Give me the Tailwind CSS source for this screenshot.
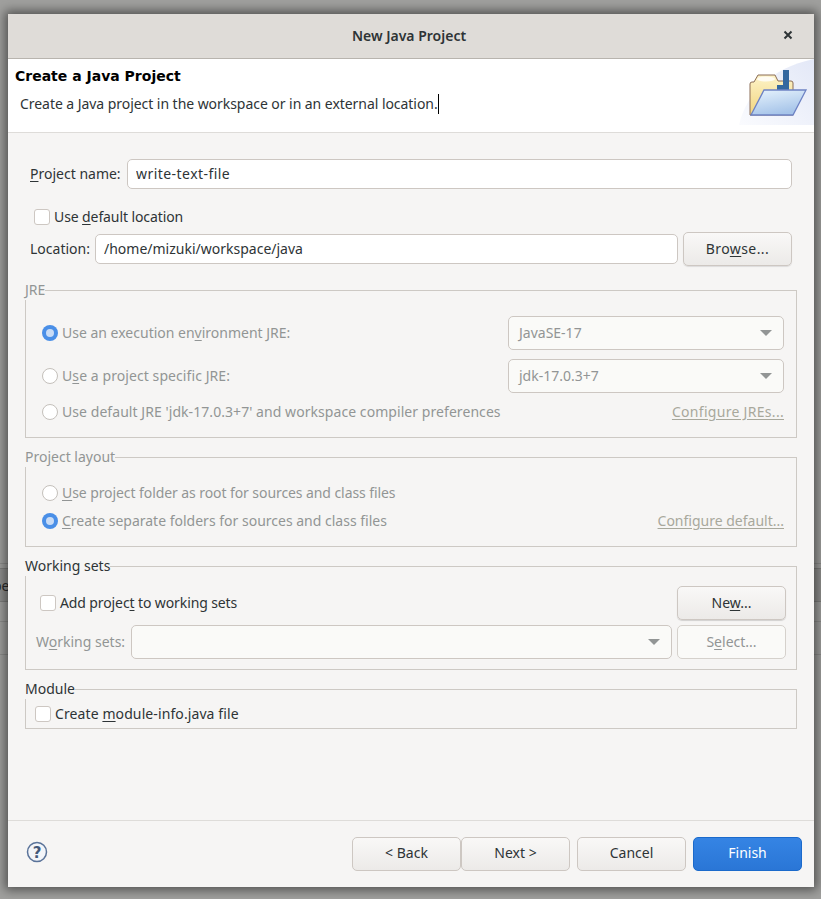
<!DOCTYPE html>
<html>
<head>
<meta charset="utf-8">
<script src="https://cdn.jsdelivr.net/npm/@tailwindcss/browser@4"></script>
</head>
<body class="m-0 bg-[#8f8f8f]">
<div class="relative h-[899px] w-[821px] overflow-hidden bg-[#a0a09e] pt-[14px] pl-[8px] font-['Noto_Sans',sans-serif] text-[14px] text-[#2e3436]">
  <div class="absolute left-0 top-[563px] h-px w-full bg-[#8d8d8b]"></div>
  <div class="absolute left-0 top-[568px] h-[34px] w-full border-y border-[#7f7f7d] bg-[#90908e]"></div>
  <div class="absolute left-0 top-[621px] h-px w-full bg-[#8d8d8b]"></div>
  <div class="absolute left-0 top-[654px] h-px w-full bg-[#8d8d8b]"></div>
  <div class="absolute left-0 top-[576px] -ml-[7px] text-[14px] leading-[20px] text-[#2a2a2a]">pe</div>
  <div class="relative flex h-[873px] w-[806px] flex-col bg-[#f6f5f4] shadow-[0_0_10px_3px_rgba(0,0,0,0.5)]">
    <div class="relative flex h-[45px] shrink-0 items-center justify-center border-b border-[#b8b4ae] bg-[#dfdcd8] pr-[4px]">
      <span class="mb-[2px] text-[14px] font-semibold">New Java Project</span>
      <svg class="absolute right-[21px] top-[16px]" width="10" height="10" viewBox="0 0 10 10"><path d="M1.5 1.5 L8.5 8.5 M8.5 1.5 L1.5 8.5" stroke="#2e3436" stroke-width="2"/></svg>
    </div>
    <div class="relative h-[74px] shrink-0 border-b border-[#dedcd9] bg-white">
      <div class="pl-[7px] pt-[6px] font-['DejaVu_Sans',sans-serif] text-[14px] font-bold leading-[22px] text-black">Create a Java Project</div>
      <div class="pl-[12px] pt-[7px] leading-[20px] tracking-[-0.05px]">Create a Java project in the workspace or in an external location.<span class="inline-block h-[20px] w-px bg-black align-top"></span></div>
      <svg class="absolute right-0 top-0" width="76" height="66" viewBox="0 0 76 66">
        <defs>
          <linearGradient id="fg" x1="0" y1="0" x2="0.4" y2="1"><stop offset="0" stop-color="#e8f4fd"/><stop offset="1" stop-color="#a6c4e9"/></linearGradient>
          <linearGradient id="bk" x1="0" y1="0" x2="0" y2="1"><stop offset="0" stop-color="#fdf3c8"/><stop offset="1" stop-color="#f1d57f"/></linearGradient>
          <linearGradient id="sw" x1="0" y1="1" x2="1" y2="0"><stop offset="0" stop-color="#fafbfe"/><stop offset="1" stop-color="#e3e8f7"/></linearGradient>
        </defs>
        <path d="M1 66 C8 36 32 9 76 0 L76 66 Z" fill="url(#sw)"/>
        <path d="M12 25 Q12 23 14 23 L16 23 L20 16 L37 16 L40 22 L53 22 Q55 22 55 24 L55 56 L12 56 Z" fill="url(#bk)" stroke="#8b6d56"/>
        <ellipse cx="28" cy="20" rx="9" ry="2.5" fill="#ffffff" opacity="0.8"/>
        <path d="M39 26 L45 26 L45 11 L51 11 L51 31 L39 31 Z" fill="#34689f"/>
        <path d="M26 31 L68 31 L55 56 L13 56 Z" fill="url(#fg)" stroke="#6d82c4" stroke-width="1.3"/>
      </svg>
    </div>
    <div class="flex-1 px-[17px]">
      <div class="mt-[26px] flex h-[30px] items-center pl-[5px]">
        <span class="mb-[2px] w-[97px]"><u class="underline-offset-2">P</u>roject name:</span>
        <input class="h-[30px] w-[665px] rounded-[5px] border border-[#cdc7c2] bg-white px-[8px] pb-[2px] text-[14px] tracking-[0.45px] text-[#2e3436] outline-none" value="write-text-file">
      </div>
      <div class="mt-[19px] flex h-[18px] items-center pl-[9px]">
        <span class="h-[16px] w-[16px] rounded-[3px] border border-[#cdc7c2] bg-white"></span>
        <span class="mb-[2px] ml-[4px] tracking-[-0.1px]">Use <u class="underline-offset-2">d</u>efault location</span>
      </div>
      <div class="mt-[6px] flex h-[34px] items-center pl-[5px]">
        <span class="mb-[2px] w-[65px]">Location:</span>
        <input class="h-[30px] w-[583px] rounded-[5px] border border-[#cdc7c2] bg-white px-[8px] pb-[2px] text-[14px] text-[#2e3436] outline-none" value="/home/mizuki/workspace/java">
        <button class="ml-[5px] h-[34px] w-[109px] rounded-[5px] border border-[#cdc7c2] bg-gradient-to-b from-[#f9f8f7] to-[#eceae8] pb-[2px] text-[14px] tracking-[0.4px] shadow-[0_1px_1px_rgba(0,0,0,0.1)]">Bro<u class="underline-offset-2">w</u>se...</button>
      </div>

      <fieldset class="mt-[14px] h-[158px] w-[772px] min-w-0 border border-[#cdc9c4] pl-[16px] pr-[12px] text-[#929595]">
        <legend class="-ml-[17px] bg-[#f6f5f4] leading-[20px]">JRE</legend>
        <div class="mt-[16px] flex h-[34px] items-center">
          <span class="flex h-[16px] w-[16px] items-center justify-center rounded-full bg-[#4a8fe7]"><span class="h-[8px] w-[8px] rounded-full bg-[#c9dcf6]"></span></span>
          <span class="mb-[2px] ml-[4px] w-[446px]">Use an execution en<u class="underline-offset-2">v</u>ironment JRE:</span>
          <div class="flex h-[34px] w-[276px] items-center justify-between rounded-[5px] border border-[#cdc7c2] bg-[#fafaf8] pl-[10px] pr-[11px]"><span class="mb-[2px]">JavaSE-17</span><svg width="12" height="6" viewBox="0 0 12 6"><path d="M0 0 H12 L6 6 Z" fill="#929595"/></svg></div>
        </div>
        <div class="mt-[9px] flex h-[34px] items-center">
          <span class="h-[16px] w-[16px] rounded-full border border-[#c4c0bb] bg-white"></span>
          <span class="mb-[2px] ml-[4px] w-[446px] tracking-[0.08px]">U<u class="underline-offset-2">s</u>e a project specific JRE:</span>
          <div class="flex h-[34px] w-[276px] items-center justify-between rounded-[5px] border border-[#cdc7c2] bg-[#fafaf8] pl-[10px] pr-[11px]"><span class="mb-[2px]">jdk-17.0.3+7</span><svg width="12" height="6" viewBox="0 0 12 6"><path d="M0 0 H12 L6 6 Z" fill="#929595"/></svg></div>
        </div>
        <div class="mt-[9px] flex h-[20px] items-center justify-between">
          <div class="flex items-center"><span class="h-[16px] w-[16px] rounded-full border border-[#c4c0bb] bg-white"></span><span class="mb-[2px] ml-[4px] tracking-[0.06px]">Use default JRE 'jdk-17.0.3+7' and workspace compiler preferences</span></div>
          <span class="mb-[2px] tracking-[0.3px] text-[#a8a89c] underline underline-offset-2">Configure JREs...</span>
        </div>
      </fieldset>

      <fieldset class="mt-[9px] h-[100px] w-[772px] min-w-0 border border-[#cdc9c4] pl-[16px] pr-[12px] text-[#929595]">
        <legend class="-ml-[17px] bg-[#f6f5f4] leading-[20px]">Project layout</legend>
        <div class="mt-[16px] flex h-[20px] items-center"><span class="h-[16px] w-[16px] rounded-full border border-[#c4c0bb] bg-white"></span><span class="mb-[2px] ml-[4px] tracking-[-0.08px]"><u class="underline-offset-2">U</u>se project folder as root for sources and class files</span></div>
        <div class="mt-[8px] flex h-[20px] items-center justify-between">
          <div class="flex items-center"><span class="flex h-[16px] w-[16px] items-center justify-center rounded-full bg-[#4a8fe7]"><span class="h-[8px] w-[8px] rounded-full bg-[#c9dcf6]"></span></span><span class="mb-[2px] ml-[4px]"><u class="underline-offset-2">C</u>reate separate folders for sources and class files</span></div>
          <span class="mb-[2px] text-[#a8a89c] underline underline-offset-2">Configure default...</span>
        </div>
      </fieldset>

      <fieldset class="mt-[9px] h-[114px] w-[772px] min-w-0 border border-[#cdc9c4] pl-[10px] pr-[10px]">
        <legend class="-ml-[11px] bg-[#f6f5f4] leading-[20px]">Working sets</legend>
        <div class="mt-[10px] flex h-[34px] items-center pl-[4px]">
          <span class="h-[16px] w-[16px] rounded-[3px] border border-[#cdc7c2] bg-white"></span>
          <span class="mb-[2px] ml-[4px] w-[617px] tracking-[-0.11px]">Add projec<u class="underline-offset-2">t</u> to working sets</span>
          <button class="h-[34px] w-[109px] rounded-[5px] border border-[#cdc7c2] bg-gradient-to-b from-[#f9f8f7] to-[#eceae8] pb-[2px] text-[14px] shadow-[0_1px_1px_rgba(0,0,0,0.15)]">Ne<u class="underline-offset-2">w</u>...</button>
        </div>
        <div class="mt-[5px] flex h-[34px] items-center">
          <span class="mb-[2px] w-[95px] text-[#929595]">W<u class="underline-offset-2">o</u>rking sets:</span>
          <div class="flex h-[34px] w-[541px] items-center justify-end rounded-[5px] border border-[#cdc7c2] bg-[#fafaf8] pr-[11px]"><svg width="12" height="6" viewBox="0 0 12 6"><path d="M0 0 H12 L6 6 Z" fill="#929595"/></svg></div>
          <button class="ml-[5px] h-[34px] w-[109px] rounded-[5px] border border-[#d5d1cc] bg-[#fafaf8] pb-[2px] text-[14px] text-[#929595]">S<u class="underline-offset-2">e</u>lect...</button>
        </div>
      </fieldset>

      <fieldset class="mt-[9px] h-[50px] w-[772px] min-w-0 border border-[#cdc9c4] pl-[9px]">
        <legend class="-ml-[10px] bg-[#f6f5f4] leading-[20px]">Module</legend>
        <div class="mt-[5px] flex h-[20px] items-center">
          <span class="h-[16px] w-[16px] rounded-[3px] border border-[#cdc7c2] bg-white"></span>
          <span class="mb-[2px] ml-[4px] tracking-[0.1px]">Create <u class="underline-offset-2">m</u>odule-info.java file</span>
        </div>
      </fieldset>
    </div>
    <div class="flex h-[67px] shrink-0 items-start border-t border-[#dedcd9] pl-[18px] pr-[12px] pt-[16px]">
      <svg class="mt-[4px]" width="22" height="22" viewBox="0 0 22 22"><circle cx="11" cy="11" r="9.5" fill="#f3f5f9" stroke="#5a7399" stroke-width="1.5"/><text x="11" y="16.5" text-anchor="middle" font-family="DejaVu Sans" font-weight="bold" font-size="15" fill="#44597a">?</text></svg>
      <div class="ml-auto flex">
        <button class="h-[34px] w-[109px] rounded-[5px] border border-[#cdc7c2] bg-gradient-to-b from-[#f9f8f7] to-[#eceae8] pb-[3px] text-[14px]">&lt; Back</button>
        <button class="h-[34px] w-[109px] rounded-[5px] border border-[#cdc7c2] bg-gradient-to-b from-[#f9f8f7] to-[#eceae8] pb-[3px] text-[14px]">Next &gt;</button>
        <button class="ml-[7px] h-[34px] w-[109px] rounded-[5px] border border-[#cdc7c2] bg-gradient-to-b from-[#f9f8f7] to-[#eceae8] pb-[3px] text-[14px]">Cancel</button>
        <button class="ml-[7px] h-[34px] w-[109px] rounded-[5px] border border-[#1b6acb] bg-gradient-to-b from-[#3584e4] to-[#2a76d6] pb-[3px] text-[14px] text-white">Finish</button>
      </div>
    </div>
  </div>
</div>
</body>
</html>
